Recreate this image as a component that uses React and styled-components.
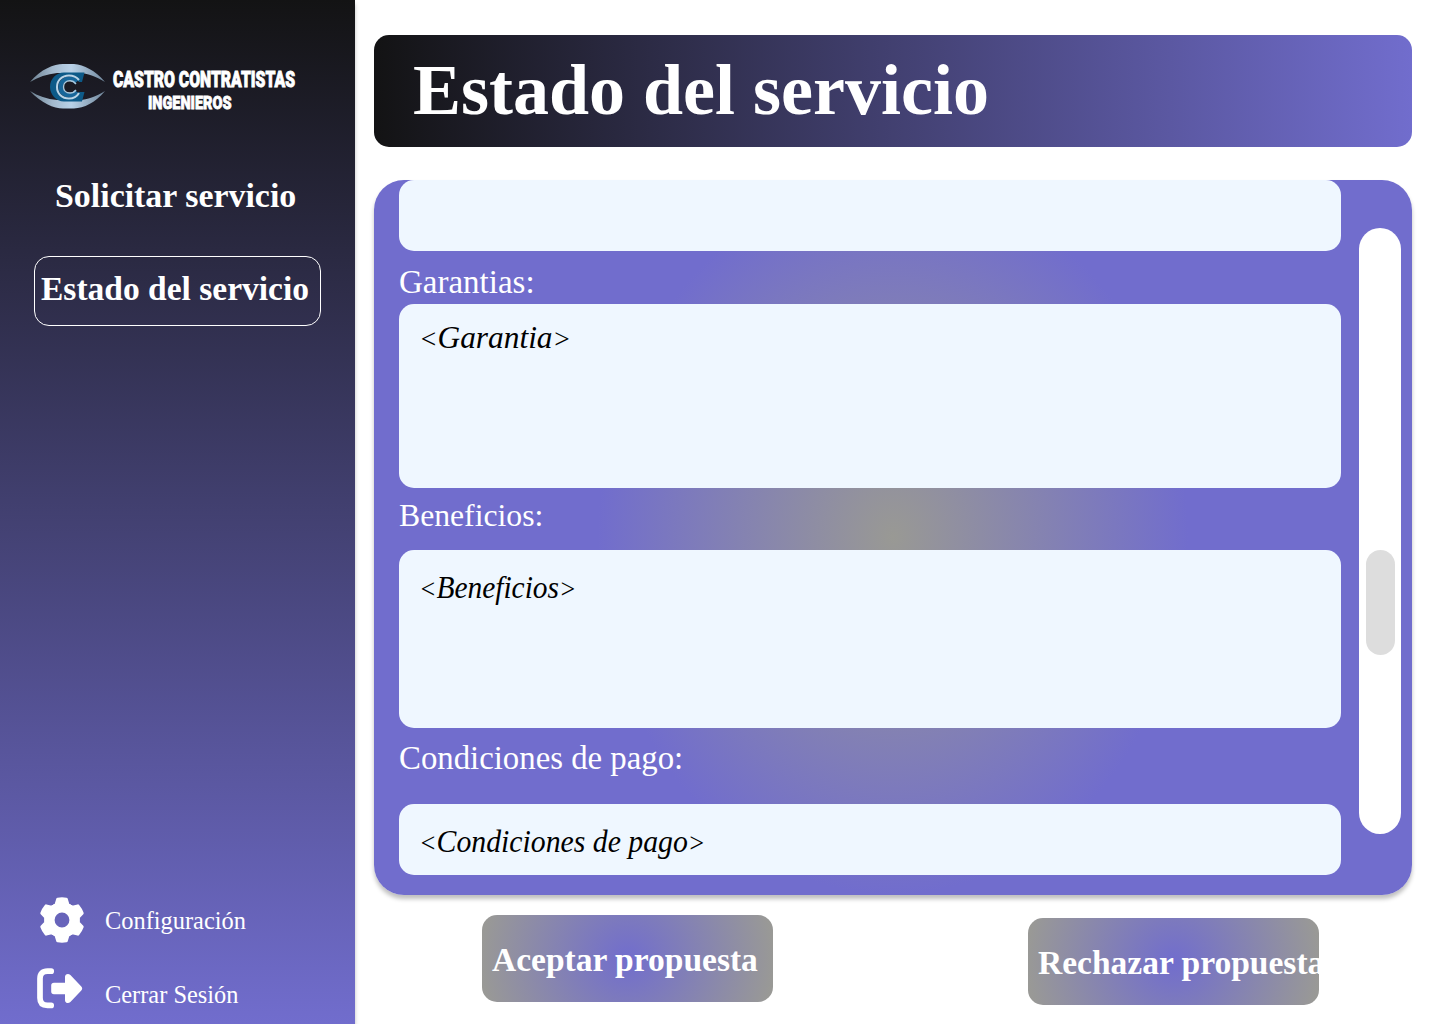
import React from "react";
import styled, { createGlobalStyle } from "styled-components";

const Global = createGlobalStyle`
  * { box-sizing: border-box; }
  body { margin: 0; background: #fff; font-family: "Liberation Serif", serif; }
`;

const Page = styled.div`
  display: flex;
  width: 1440px;
  height: 1024px;
  overflow: hidden;
  background: #fff;
`;

const Sidebar = styled.aside`
  display: flex;
  flex-direction: column;
  flex: none;
  width: 355px;
  height: 1024px;
  padding: 60px 30px 6px;
  color: #fff;
  background: linear-gradient(180deg, #131314 0%, #716dcd 100%);
  box-shadow: 0 4px 4px rgba(0, 0, 0, 0.25);
`;

const Logo = styled.svg`
  flex: none;
  display: block;
  width: 290px;
  height: 56px;
  overflow: visible;
`;

const Nav = styled.nav`
  display: flex;
  flex-direction: column;
  gap: 25px;
  margin-top: 45px;
`;

const NavItem = styled.a`
  height: 70px;
  width: 287px;
  margin-left: 4px;
  padding-top: ${(p) => (p.$active ? 14 : 16)}px;
  padding-left: ${(p) => (p.$active ? 6 : 20)}px;
  border: 1px solid ${(p) => (p.$active ? "#fff" : "transparent")};
  border-radius: 15px;
  font-size: ${(p) => p.$size}px;
  font-weight: 700;
  line-height: 36px;
  white-space: nowrap;
`;

const Footer = styled.div`
  display: flex;
  flex-direction: column;
  gap: 26px;
  margin-top: auto;
`;

const FooterLink = styled.a`
  display: grid;
  grid-template-columns: 75px auto;
  align-items: center;
  height: 48px;
  font-size: 24.4px;
  line-height: 28px;

  svg { display: block; margin-left: ${(p) => p.$inset}px; margin-top: ${(p) => p.$lift}px; }
`;

const FooterText = styled.span`
  padding-top: 2px;
`;

const Main = styled.main`
  display: flex;
  flex-direction: column;
  width: 1057px;
  padding: 35px 0 0 19px;
`;

const Title = styled.h1`
  flex: none;
  width: 1038px;
  height: 112px;
  margin: 0 0 33px;
  padding: 15px 39px;
  border-radius: 15px;
  color: #fff;
  font-size: 72px;
  line-height: 80px;
  background: linear-gradient(90deg, #131314 0%, #716dcd 100%);
`;

const Panel = styled.section`
  display: flex;
  flex: none;
  gap: 18px;
  width: 1038px;
  height: 715px;
  padding-left: 25px;
  border-radius: 30px;
  background: radial-gradient(ellipse 295px 357px at 50% 50%, #999994 0%, #716dcd 100%);
  box-shadow: 0 4px 4px rgba(0, 0, 0, 0.25);
`;

const Form = styled.div`
  display: flex;
  flex-direction: column;
  width: 942px;
`;

const Label = styled.label`
  flex: none;
  height: ${(p) => p.$height}px;
  padding-top: ${(p) => p.$top}px;
  color: #fff;
  font-size: ${(p) => p.$size}px;
  line-height: 36px;
`;

const Field = styled.div`
  flex: none;
  height: ${(p) => p.$height}px;
  padding: ${(p) => p.$top}px 20px 0;
  border-radius: 15px;
  background: #eff7ff;
`;

const Placeholder = styled.span`
  display: inline-block;
  color: #000;
  font-size: 32px;
  font-style: italic;
  line-height: 36px;
  white-space: nowrap;
  transform: scaleX(${(p) => p.$stretch});
  transform-origin: left center;
`;

const Bracket = styled.span`
  font-size: 28px;
  line-height: 1;
`;

const Track = styled.div`
  width: 42px;
  height: 606px;
  margin-top: 48px;
  padding: 322px 6px 0 7px;
  border-radius: 21px;
  background: #fff;
`;

const Thumb = styled.div`
  height: 105px;
  border-radius: 15px;
  background: #ddd;
`;

const Actions = styled.div`
  display: flex;
  justify-content: space-between;
  width: 837px;
  margin: 20px 0 0 108px;
`;

const Action = styled.button`
  width: 291px;
  height: 87px;
  margin-top: ${(p) => p.$drop || 0}px;
  padding: 2px 0 0 10px;
  border: 0;
  border-radius: 15px;
  color: #fff;
  text-align: left;
  white-space: nowrap;
  font-family: inherit;
  font-size: 33.5px;
  font-weight: 700;
  background: radial-gradient(circle 146px at 50% 50%, #716dcd 0%, #999996 100%);
`;

function BrandLogo() {
  return (
    <Logo viewBox="30 60 290 56">
      <defs>
        <linearGradient id="lid" x1="0" x2="1" y1="0" y2="0">
          <stop offset="0" stopColor="#6d8191" />
          <stop offset="0.3" stopColor="#a3b9cd" />
          <stop offset="0.55" stopColor="#b9d2e8" />
          <stop offset="1" stopColor="#71889d" />
        </linearGradient>
      </defs>
      <path d="M30 82C41 69 54 64 63 64H74C84 65 95 70 105 82C96 76 87 73.500 80 73H57C47 74 38 77 30 82Z" fill="url(#lid)" />
      <path d="M30 91C41 103 54 108.500 63 108.500H74C84 108 95 103 105 91C96 97 87 99.500 80 100H57C47 99 38 96 30 91Z" fill="url(#lid)" />
      <path d="M84.500 72.500L82 82H79C76 78 73 76 69 76C62 76 58 81 58 87C58 93 62 98 69 98C74 98 77 96 79 92H84.500L82 101.500H64C56 101.500 50 94 50 87C50 79 56 72.500 64 72.500Z" fill="#0d5a88" />
      <path d="M76.500 82C74.500 79.500 72.500 78.500 69.500 78.500C64.500 78.500 60.500 82 60.500 87S64.500 95.500 69.500 95.500C73 95.500 75 94 76.500 91.500" fill="none" stroke="#17669a" strokeWidth="4.500" />
      <path d="M79 80C76.500 77 73.500 75.500 69 75.500C62 75.500 57 80.500 57 87S62 98.500 69 98.500C74 98.500 77 96.500 79 93" fill="none" stroke="#b9d4e7" strokeWidth="2" />
      <path d="M76 84C74 81.500 72 80.800 70 80.800C66 80.800 63.500 83.500 63.500 87S66 93 70 93C72.500 93 74.500 92 76 90" fill="none" stroke="#a9c8dd" strokeWidth="1.400" />
      <g fill="#fff" stroke="#fff" fontFamily="Roboto, sans-serif" fontWeight="900">
        <text x="113" y="86.500" fontSize="21.500" strokeWidth="0.9" textLength="182" lengthAdjust="spacingAndGlyphs">CASTRO CONTRATISTAS</text>
        <text x="148" y="109" fontSize="18.700" strokeWidth="0.8" textLength="83.500" lengthAdjust="spacingAndGlyphs">INGENIEROS</text>
      </g>
    </Logo>
  );
}

function GearIcon() {
  return (
    <svg width="46" height="46" viewBox="-23 -23 46 46" fill="#fff" stroke="#fff">
      <circle r="12.4" fill="none" strokeWidth="10" />
      {[0, 60, 120, 180, 240, 300].map((angle) => (
        <path key={angle} d="M-4.200 -20.800Q0 -21.600 4.200 -20.800L5.800 -15.500L9 -13H-9L-5.800 -15.500Z" strokeWidth="3.200" strokeLinejoin="round" transform={`rotate(${angle})`} />
      ))}
    </svg>
  );
}

function ExitIcon() {
  return (
    <svg width="46" height="41" viewBox="0 0 46 41" fill="#fff">
      <path d="M14.200 3.200H10.500Q3 3.200 3 10.500V30Q3 37.400 10.500 37.400H14.200" fill="none" stroke="#fff" strokeWidth="5.700" strokeLinecap="round" strokeLinejoin="round" />
      <path d="M17 14.700H28V8.800C28 6 31.300 4.900 33.400 7L44.300 18.500C45.500 19.800 45.500 21.200 44.300 22.500L33.400 34C31.300 36.100 28 35 28 32.200V26.300H17Q14.200 26.300 14.200 23.500V17.500Q14.200 14.700 17 14.700Z" />
    </svg>
  );
}

function Tag({ children, stretch }) {
  return (
    <Placeholder $stretch={stretch}>
      <Bracket>&lt;</Bracket>
      {children}
      <Bracket>&gt;</Bracket>
    </Placeholder>
  );
}

export default function App() {
  return (
    <>
      <Global />
      <Page>
        <Sidebar>
          <BrandLogo />
          <Nav>
            <NavItem $size={33.9}>Solicitar servicio</NavItem>
            <NavItem $active $size={33.5}>Estado del servicio</NavItem>
          </Nav>
          <Footer>
            <FooterLink $inset={8.5} $lift={-1}><GearIcon /><FooterText>Configuración</FooterText></FooterLink>
            <FooterLink $inset={7} $lift={-11}><ExitIcon /><FooterText>Cerrar Sesión</FooterText></FooterLink>
          </Footer>
        </Sidebar>
        <Main>
          <Title>Estado del servicio</Title>
          <Panel>
            <Form>
              <Field $height={71} $top={0} />
              <Label $height={53} $top={13} $size={33}>Garantias:</Label>
              <Field $height={184} $top={15}><Tag stretch={0.98}>Garantia</Tag></Field>
              <Label $height={62} $top={10} $size={31.7}>Beneficios:</Label>
              <Field $height={178} $top={19}><Tag stretch={0.92}>Beneficios</Tag></Field>
              <Label $height={76} $top={12} $size={32.8}>Condiciones de pago:</Label>
              <Field $height={71} $top={19}><Tag stretch={0.93}>Condiciones de pago</Tag></Field>
            </Form>
            <Track><Thumb /></Track>
          </Panel>
          <Actions>
            <Action>Aceptar propuesta</Action>
            <Action $drop={3}>Rechazar propuesta</Action>
          </Actions>
        </Main>
      </Page>
    </>
  );
}
